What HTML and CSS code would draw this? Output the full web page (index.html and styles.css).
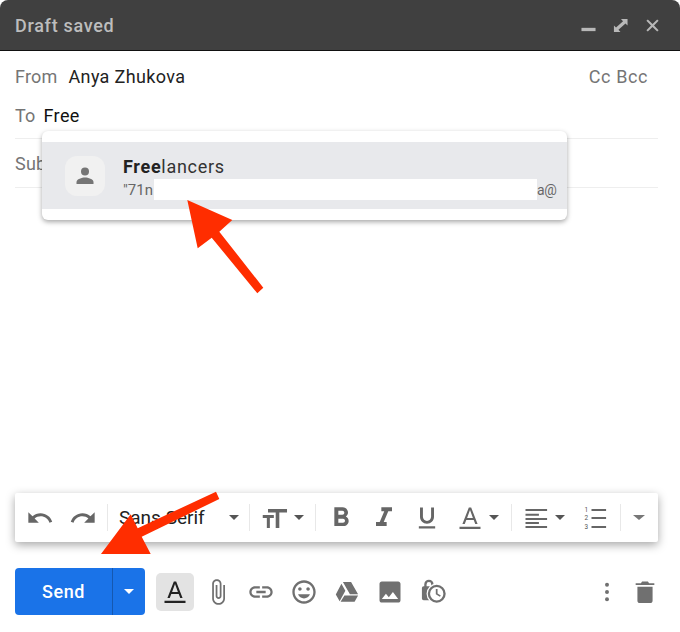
FILE: index.html
```html
<!DOCTYPE html>
<html lang="en">
<head>
<meta charset="utf-8">
<title>Draft saved</title>
<link rel="stylesheet" href="styles.css">
</head>
<body>
<main class="compose">
  <header class="titlebar">
    <span class="title">Draft saved</span>
    <div class="window-controls">
      <svg class="wc" viewBox="0 0 16 16"><rect x="0.5" y="10.5" width="15" height="3.5" /></svg>
      <svg class="wc" viewBox="0 0 16 16"><path d="M8.500 1H15.500V8L13.300 5.800 5.800 12.400 8 15H1V8L3.200 10.200 10.700 3.500z"/></svg>
      <svg class="wc" viewBox="0 0 16 16"><path d="M3 1.500 8 6.400 13 1.500 14.500 3 9.600 8 14.500 13 13 14.500 8 9.600 3 14.500 1.500 13 6.400 8 1.500 3z"/></svg>
    </div>
  </header>

  <section class="fields">
    <div class="row row-from">
      <span class="label label-from">From</span>
      <span class="value">Anya Zhukova</span>
      <span class="cc">Cc Bcc</span>
    </div>
    <div class="row row-to">
      <span class="label label-to">To</span>
      <span class="value value-to">Free</span>
    </div>
    <div class="row row-subject">
      <span class="label">Subject</span>
    </div>
  </section>

  <div class="toolbar">
    <button class="tb tb-icon"><svg viewBox="0 0 24 24"><path d="M12.5 8c-2.65 0-5.05.99-6.9 2.6L2 7v9h9l-3.62-3.62c1.39-1.16 3.16-1.88 5.12-1.88 3.54 0 6.55 2.31 7.6 5.5l2.37-.78C21.08 11.03 17.15 8 12.5 8z"/></svg></button>
    <button class="tb tb-icon"><svg viewBox="0 0 24 24"><path d="M18.4 10.6C16.55 8.99 14.15 8 11.5 8c-4.65 0-8.58 3.03-9.96 7.22L3.9 16c1.05-3.19 4.05-5.5 7.6-5.5 1.95 0 3.73.72 5.12 1.88L13 16h9V7l-3.6 3.6z"/></svg></button>
    <span class="sep sep-gap"></span>
    <button class="tb tb-font"><span>Sans Serif</span><i class="caret"></i></button>
    <span class="sep"></span>
    <button class="tb tb-group tb-size"><svg viewBox="0 0 24 24"><path d="M6 4.300h16.300v3h-6.600v13.300h-3.100V7.300H6zM1.500 9.500H11v2.400H7.600v8.700H5v-8.700H1.500z"/></svg><i class="caret"></i></button>
    <span class="sep"></span>
    <button class="tb tb-icon tb-first tb-large"><svg viewBox="0 0 24 24"><path d="M15.6 10.79c.97-.67 1.65-1.77 1.65-2.79 0-2.26-1.75-4-4-4H7v14h7.04c2.09 0 3.71-1.7 3.71-3.79 0-1.52-.86-2.82-2.15-3.42zM10 6.5h3c.83 0 1.5.67 1.5 1.5s-.67 1.5-1.5 1.5h-3v-3zm3.500 9H10v-3h3.500c.83 0 1.500.67 1.500 1.500s-.67 1.500-1.500 1.500z"/></svg></button>
    <button class="tb tb-icon tb-large"><svg viewBox="0 0 24 24"><path d="M10 4v3h2.210l-3.420 8H6v3h8v-3h-2.210l3.420-8H18V4z"/></svg></button>
    <button class="tb tb-icon"><svg viewBox="0 0 24 24"><path d="M12 17c3.310 0 6-2.690 6-6V3h-2.500v8c0 1.930-1.570 3.500-3.500 3.500S8.500 12.930 8.500 11V3H6v8c0 3.310 2.690 6 6 6zm-7 2v2h14v-2H5z"/></svg></button>
    <button class="tb tb-group tb-color"><svg viewBox="0 0 24 24"><path d="M13 3h-2L5.500 17.200h2l1.300-3.500h6.400l1.300 3.500h2zM9.500 12 12 5.200l2.500 6.800zM3 19.400h18V21.400H3z"/></svg><i class="caret"></i></button>
    <span class="sep"></span>
    <button class="tb tb-group tb-align"><svg viewBox="0 0 24 24"><path d="M3 4.300h18.500V6H3zM3 8.300h11.500V10H3zM3 12.100h18.500v1.700H3zM3 15.500h11.500v1.700H3zM3 18.900h18.500v1.700H3z"/></svg><i class="caret"></i></button>
    <button class="tb tb-icon"><svg viewBox="0 0 24 24"><path d="M9 4.300h12.500V6H9zM9 11.200h12.500v1.700H9zM9 18.900h12.500v1.700H9z"/><text x="3" y="7" class="num">1</text><text x="3" y="14" class="num">2</text><text x="3" y="21.500" class="num">3</text></svg></button>
    <span class="sep sep-gap"></span>
    <button class="tb tb-more"><i class="caret caret-wide"></i></button>
  </div>

  <footer class="actions">
    <div class="send">
      <button class="send-main">Send</button>
      <button class="send-more"><i class="caret caret-white"></i></button>
    </div>
    <button class="act act-format"><svg viewBox="0 0 24 24"><path class="dark" d="M13 3h-2L5.500 17.200h2l1.300-3.500h6.400l1.300 3.500h2zM9.500 12 12 5.200l2.500 6.800zM3 19.400h18V21.400H3z"/></svg></button>
    <button class="act"><svg viewBox="0 0 24 24"><path d="M16.500 6v11.500c0 2.210-1.790 4-4 4s-4-1.790-4-4V5c0-1.380 1.120-2.500 2.500-2.500s2.500 1.120 2.500 2.500v10.500c0 .55-.45 1-1 1s-1-.45-1-1V6H10v9.500c0 1.380 1.120 2.500 2.500 2.500s2.500-1.120 2.500-2.500V5c0-2.210-1.790-4-4-4S7 2.790 7 5v12.500c0 3.040 2.460 5.500 5.500 5.500s5.500-2.460 5.500-5.500V6h-1.500z"/></svg></button>
    <button class="act"><svg viewBox="0 0 24 24"><path d="M3.900 12c0-1.710 1.390-3.100 3.100-3.100h4V7H7c-2.760 0-5 2.240-5 5s2.240 5 5 5h4v-1.900H7c-1.710 0-3.100-1.390-3.100-3.100zM8 13h8v-2H8v2zm9-6h-4v1.900h4c1.710 0 3.100 1.390 3.100 3.100s-1.390 3.100-3.100 3.100h-4V17h4c2.760 0 5-2.240 5-5s-2.240-5-5-5z"/></svg></button>
    <button class="act"><svg viewBox="0 0 24 24"><path d="M11.990 2C6.470 2 2 6.480 2 12s4.470 10 9.990 10C17.520 22 22 17.520 22 12S17.520 2 11.990 2zM12 20c-4.420 0-8-3.580-8-8s3.580-8 8-8 8 3.580 8 8-3.580 8-8 8zm3.500-9c.83 0 1.500-.67 1.500-1.500S16.330 8 15.500 8 14 8.670 14 9.500s.67 1.500 1.500 1.500zm-7 0c.83 0 1.500-.67 1.500-1.500S9.330 8 8.500 8 7 8.670 7 9.500 7.670 11 8.500 11zm3.500 6.500c2.330 0 4.310-1.460 5.110-3.500H6.890c.8 2.040 2.780 3.500 5.110 3.500z"/></svg></button>
    <button class="act"><svg viewBox="0 0 24 24"><path d="M8.500 3.400h7l6 10.600h-7zM7.200 5 2.400 14.200l3.300 5.800 4.900-9zM9.800 15 6.500 20.400h12l3-5.400z"/></svg></button>
    <button class="act"><svg viewBox="0 0 24 24"><path d="M21 19V5c0-1.100-.9-2-2-2H5c-1.100 0-2 .9-2 2v14c0 1.100.9 2 2 2h14c1.100 0 2-.9 2-2zM8.500 13.500l2.500 3.010L14.500 12l4.500 6H5l3.500-4.500z"/></svg></button>
    <button class="act"><svg viewBox="0 0 24 24"><path d="M4.500 7V5.500a4 4 0 0 1 8 0V7h.5a1.500 1.500 0 0 1 1.500 1.500v9a1.500 1.500 0 0 1-1.500 1.500H4a1.500 1.500 0 0 1-1.500-1.500v-9A1.500 1.500 0 0 1 4 7zm2 0h4V5.500a2 2 0 0 0-4 0z"/><circle class="knock" cx="15.200" cy="13.500" r="8.700"/><path d="M15.200 5.800a7.700 7.700 0 1 0 0 15.400 7.700 7.700 0 0 0 0-15.400zm0 13.400a5.700 5.700 0 1 1 0-11.400 5.700 5.700 0 0 1 0 11.400zM14.400 9.500v4.500l3.500 2.100.8-1.200-2.800-1.700V9.500z"/></svg></button>
    <div class="spacer"></div>
    <button class="act"><svg viewBox="0 0 24 24"><circle cx="12" cy="5.700" r="1.700"/><circle cx="12" cy="12" r="1.700"/><circle cx="12" cy="18.300" r="1.700"/></svg></button>
    <button class="act act-trash"><svg viewBox="0 0 24 24"><path d="M5.500 7.500h13v12c0 1.100-.9 2-2 2h-9c-1.100 0-2-.9-2-2zM20 4.500h-4.500l-1-1.500h-5l-1 1.500H4V6h16z"/></svg></button>
  </footer>

  <div class="suggest">
    <div class="suggest-item">
      <div class="avatar"><svg viewBox="0 0 24 24"><circle cx="12" cy="7.500" r="4"/><path d="M3.500 20v-2c0-3 5.500-4.500 8.500-4.500s8.500 1.500 8.500 4.500v2z"/></svg></div>
      <div class="suggest-text">
        <div class="suggest-name"><b>Free</b>lancers</div>
        <div class="suggest-mail"><span class="mail-start">"71n</span><span class="redact"></span><span class="mail-end">a@</span></div>
      </div>
    </div>
  </div>

  <svg class="arrow" viewBox="0 0 680 632"><path d="M187.300 200 232.300 220 219.300 231.700 263.300 287.700 257.300 293.300 211.700 237.700 197.700 248.300z"/><path d="M219.300 499 141.700 536.700 150.700 554H101L130.700 514.300 137.700 528.300 216 491.700z"/></svg>
</main>
</body>
</html>
```

FILE: styles.css
```css
* { box-sizing: border-box; }

html, body {
  margin: 0;
  padding: 0;
  background: #fff;
}

body {
  font-family: Roboto, "Liberation Sans", sans-serif;
  color: #222;
}

button {
  font: inherit;
  border: 0;
  padding: 0;
  background: none;
}

.compose {
  position: relative;
  width: 680px;
  height: 632px;
  display: flex;
  flex-direction: column;
  overflow: hidden;
}

.titlebar {
  height: 51px;
  flex: none;
  background: #404040;
  border-bottom: 1px solid #111;
  border-radius: 8px 8px 0 0;
  display: flex;
  align-items: center;
  justify-content: space-between;
  padding: 0 20px 0 15px;
}

.title {
  font-size: 18px;
  font-weight: 500;
  letter-spacing: 0.7px;
  color: #bdbdbd;
}

.window-controls {
  display: flex;
  gap: 17px;
  align-items: center;
}

.wc {
  width: 15px;
  height: 15px;
  fill: #b8b8b8;
}

.fields {
  flex: none;
  padding: 0 22px 0 15px;
  font-size: 18px;
}

.row {
  display: flex;
  align-items: center;
}

.row-from { height: 50px; }

.row-to {
  height: 47px;
  margin-top: -9px;
  border-bottom: 1px solid #eee;
}

.row-subject {
  height: 49px;
  border-bottom: 1px solid #eee;
}

.label {
  color: #757575;
  letter-spacing: 0.2px;
}

.label-from { margin-right: 11px; }
.label-to { margin-right: 8px; }

.value {
  color: #222;
  letter-spacing: 0.35px;
}

.value-to { color: #111; }

.cc {
  margin-left: auto;
  margin-right: 10px;
  letter-spacing: 0.6px;
  color: #757575;
}

.toolbar {
  margin: auto 22px 0 15px;
  height: 49px;
  flex: none;
  display: flex;
  align-items: center;
  padding-left: 3px;
  background: #fff;
  border-radius: 2px;
  box-shadow: 0 3px 10px rgba(0, 0, 0, 0.35);
}

.tb {
  display: flex;
  align-items: center;
  justify-content: center;
  height: 100%;
  flex: none;
}

.tb svg {
  fill: #666;
  width: 28px;
  height: 28px;
  flex: none;
}

.tb-large svg {
  width: 32px;
  height: 32px;
}

.tb-icon { width: 43px; }
.tb-first { margin-left: 3px; }

.tb-group {
  justify-content: flex-start;
  gap: 5px;
}

.tb-size { width: 65px; padding-left: 11px; }
.tb-color { width: 63px; padding-left: 8px; }
.tb-align { width: 61.5px; padding-left: 9.5px; }

.tb-font {
  width: 141px;
  justify-content: space-between;
  padding: 0 10px 0 11px;
  color: #222;
  font-size: 19px;
}

.tb-more { width: 37px; }

.sep {
  width: 1px;
  height: 27px;
  flex: none;
  background: #e8e8e8;
}

.sep-gap { margin-left: 3px; }

.caret {
  display: block;
  flex: none;
  width: 0;
  height: 0;
  border-left: 5.5px solid transparent;
  border-right: 5.5px solid transparent;
  border-top: 5.5px solid #555;
}

.caret-wide {
  border-left-width: 6px;
  border-right-width: 6px;
  border-top-color: #777;
}

.caret-white { border-top-color: #fff; }

.num {
  font-size: 5.5px;
  fill: #555;
}

.actions {
  height: 47px;
  margin: 26px 0 17px 15px;
  flex: none;
  display: flex;
  align-items: center;
  padding-right: 18.5px;
}

.send {
  display: flex;
  width: 130px;
  height: 47px;
  margin-right: 11px;
  color: #fff;
  background: #1a73e8;
  border-radius: 4px;
  overflow: hidden;
  flex: none;
}

.send-main {
  width: 98px;
  font-size: 18px;
  font-weight: 500;
  letter-spacing: 0.6px;
  color: #fff;
  border-right: 1px solid #1558b0;
}

.send-more {
  flex: 1;
  display: flex;
  align-items: center;
  justify-content: center;
}

.act {
  width: 43px;
  height: 38px;
  display: flex;
  align-items: center;
  justify-content: center;
  flex: none;
}

.act svg {
  width: 28px;
  height: 28px;
  fill: #707070;
}

.act-format {
  width: 38px;
  margin-right: 2.5px;
  background: #e3e3e3;
  border-radius: 5px;
}

.act svg .dark { fill: #222; }
.act svg .knock { fill: #fff; }

.spacer { flex: 1; }

.act-trash { width: 33px; }

.suggest {
  position: absolute;
  left: 42px;
  top: 131px;
  width: 525px;
  height: 89px;
  padding-top: 11px;
  background: #fff;
  border-radius: 6px;
  box-shadow: 0 2px 5px rgba(0, 0, 0, 0.35);
}

.suggest-item {
  height: 67px;
  background: #e8e9ec;
  display: flex;
  align-items: center;
  padding-left: 23px;
  gap: 18px;
}

.avatar {
  width: 40px;
  height: 40px;
  border-radius: 12px;
  background: #f1f1f1;
  display: flex;
  align-items: center;
  justify-content: center;
}

.avatar svg {
  width: 24px;
  height: 24px;
  fill: #757575;
}

.suggest-text {
  flex: 1;
  align-self: flex-start;
  padding-top: 14px;
}

.suggest-name {
  font-size: 18px;
  letter-spacing: 0.7px;
  line-height: 22px;
  color: #333;
}

.suggest-name b {
  font-weight: 700;
  color: #222;
}

.suggest-mail {
  display: flex;
  align-items: center;
  height: 21px;
  margin-top: 1px;
  font-size: 15px;
  color: #666;
}

.mail-start {
  width: 31px;
  white-space: nowrap;
  flex: none;
}

.mail-end {
  font-size: 14px;
  letter-spacing: -0.3px;
}

.redact {
  width: 383px;
  height: 21px;
  flex: none;
  background: #fff;
}

.arrow {
  position: absolute;
  left: 0;
  top: 0;
  width: 680px;
  height: 632px;
  fill: #ff2d00;
  pointer-events: none;
}
```
